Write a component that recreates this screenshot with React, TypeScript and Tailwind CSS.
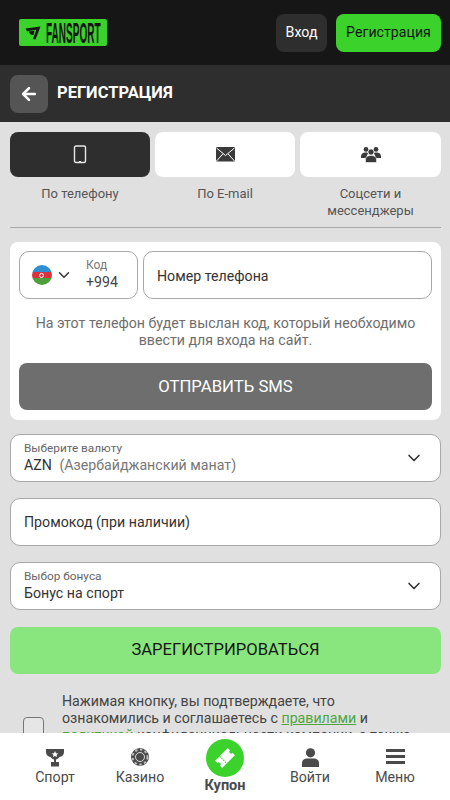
import type { ReactNode } from 'react'
import { ArrowLeft, ChevronDown } from 'lucide-react'

function PhoneIcon() {
  return (
    <svg width="14" height="19" viewBox="0 0 14 19" fill="none">
      <rect x="1.5" y="1" width="11" height="16.5" rx="1.5" stroke="currentColor" strokeWidth="1.4" />
      <rect x="6" y="16" width="2" height="1" fill="currentColor" />
    </svg>
  )
}

function MailIcon() {
  return (
    <svg width="19" height="15" viewBox="0 0 19 15">
      <rect width="19" height="14.5" rx="1" fill="#3a3a3a" />
      <path d="M0.5 1 L9.5 8.5 L18.5 1 M0.5 14 L7 6.8 M18.5 14 L12 6.8" fill="none" stroke="#fff" strokeWidth="1" />
    </svg>
  )
}

function PeopleIcon() {
  return (
    <svg width="20" height="17" viewBox="0 0 20 17" fill="#3a3a3a">
      <circle cx="5" cy="3.4" r="2.4" />
      <circle cx="15" cy="3.4" r="2.4" />
      <path d="M0 11 C0 7.5 2 6.5 5 6.5 C6 6.5 7 6.8 7 7 L5 12 H0Z" />
      <path d="M20 11 C20 7.5 18 6.5 15 6.5 C14 6.5 13 6.8 13 7 L15 12 H20Z" />
      <circle cx="10" cy="6" r="3" stroke="#fff" strokeWidth="0.6" />
      <path d="M4.5 16.5 V13.5 C4.5 10.5 7 9.5 10 9.5 C13 9.5 15.5 10.5 15.5 13.5 V16.5Z" stroke="#fff" strokeWidth="0.6" />
    </svg>
  )
}

function LogoMark() {
  return (
    <svg width="16" height="14" viewBox="0 0 16 14" fill="#161616" className="shrink-0">
      <path d="M0.5 2.5 L15.5 0.5 L10.5 13.5 L8 13 L11.3 3.8 L2 5.2Z" />
      <path d="M3.5 5.5 L9.5 4.8 L8.5 9 C6.5 9.5 4.5 8 3.5 5.5Z" />
    </svg>
  )
}

function Flag() {
  return (
    <span className="relative flex h-5 w-5 shrink-0 flex-col overflow-hidden rounded-full">
      <span className="h-[7px] bg-[#2f8fd0]" />
      <span className="h-[6px] bg-[#d8323f]" />
      <span className="h-[7px] bg-[#4f9e3c]" />
      <span className="absolute left-[7px] top-[7.5px] h-[5px] w-[5px] rounded-full border border-white" />
    </span>
  )
}

function NavItem({ label, icon }: { label: string; icon: ReactNode }) {
  return (
    <div className="flex flex-1 flex-col items-center text-[#4a4a4a]">
      <div className="flex h-[34px] items-end">{icon}</div>
      <span className="text-[14.2px] leading-5">{label}</span>
    </div>
  )
}

function Field({ children, right }: { children: ReactNode; right?: ReactNode }) {
  return (
    <div className="flex h-[48px] items-center justify-between rounded-[10px] border border-[#a8a8a8] bg-white pl-[13px] pr-[16px]">
      <div>{children}</div>
      {right}
    </div>
  )
}

const tabLabel = 'mt-[8px] text-center text-[13px] leading-[17px] text-[#555]'

export default function App() {
  return (
    <div className="flex h-screen flex-col overflow-hidden bg-[#e0e0e0] font-['Roboto',sans-serif]">
      <header className="flex h-[65px] shrink-0 items-center justify-between bg-[#161616] pl-[19px] pr-[9px]">
        <div className="flex h-[27px] w-[88px] items-center gap-[5px] rounded-[2px] bg-[#3bd22c] pl-[6px]">
          <LogoMark />
          <span className="w-[55px] shrink-0 origin-left scale-x-[0.335] whitespace-nowrap font-['Liberation_Sans',sans-serif] text-[30px] font-bold leading-none text-[#161616]">
            FANSPORT
          </span>
        </div>
        <div className="flex gap-[9px]">
          <button className="h-[38px] w-[51px] rounded-[8px] bg-[#2e2e2e] text-[14.2px] text-white">Вход</button>
          <button className="h-[38px] w-[105px] rounded-[8px] bg-[#3bd22c] text-[14.2px] text-[#161616]">Регистрация</button>
        </div>
      </header>

      <div className="flex h-[57px] shrink-0 items-center gap-[9px] bg-[#2e2e2e] pl-[10px]">
        <button className="flex h-[38px] w-[38px] items-center justify-center rounded-[8px] bg-[#555]">
          <ArrowLeft size={20} strokeWidth={3} className="text-white" />
        </button>
        <h1 className="text-[16.5px] font-bold text-white">РЕГИСТРАЦИЯ</h1>
      </div>

      <main className="min-h-0 flex-1 overflow-hidden px-[9px] pt-[10px]">
        <div className="grid grid-cols-[140px_140px_141px] gap-[5px] pl-[1px]">
          <div>
            <div className="flex h-[45px] items-center justify-center rounded-[8px] bg-[#2e2e2e] text-[#e8e8e8]">
              <PhoneIcon />
            </div>
            <p className={tabLabel}>По телефону</p>
          </div>
          <div>
            <div className="flex h-[45px] items-center justify-center rounded-[8px] bg-white">
              <MailIcon />
            </div>
            <p className={tabLabel}>По E-mail</p>
          </div>
          <div>
            <div className="flex h-[45px] items-center justify-center rounded-[8px] bg-white">
              <PeopleIcon />
            </div>
            <p className={tabLabel}>
              Соцсети и
              <br />
              мессенджеры
            </p>
          </div>
        </div>
        <div className="ml-[1px] mt-[8px] h-px bg-[#a8a8a8]" />

        <section className="ml-[1px] mt-[14px] rounded-[8px] bg-white px-[9px] pb-[10px] pt-[9px]">
          <div className="flex gap-[5px]">
            <div className="flex h-[48px] w-[119px] shrink-0 items-center rounded-[10px] border border-[#a8a8a8] pl-[12px]">
              <Flag />
              <ChevronDown size={18} strokeWidth={2} className="ml-[3px] text-[#333]" />
              <div className="ml-[13px]">
                <div className="text-[12px] leading-[15px] text-[#777]">Код</div>
                <div className="text-[14.2px] leading-[19px] text-[#444]">+994</div>
              </div>
            </div>
            <div className="flex h-[48px] flex-1 items-center rounded-[10px] border border-[#a8a8a8] pl-[13px] pt-[3px] text-[14.2px] text-[#333]">
              Номер телефона
            </div>
          </div>
          <p className="mt-[16px] px-2 text-center text-[14.2px] leading-[17px] text-[#6e6e6e]">
            На этот телефон будет выслан код, который необходимо ввести для входа на сайт.
          </p>
          <button className="mt-[14px] h-[47px] w-full rounded-[8px] bg-[#6e6e6e] text-[16.7px] text-white">
            ОТПРАВИТЬ SMS
          </button>
        </section>

        <div className="ml-[1px] mt-[14px] flex flex-col gap-[16px]">
          <Field right={<ChevronDown size={20} strokeWidth={2} className="text-[#333]" />}>
            <div className="text-[11.8px] leading-[15px] text-[#666]">Выберите валюту</div>
            <div className="text-[14.2px] leading-[19px] text-[#333]">
              AZN <span className="ml-1 text-[#777]">(Азербайджанский манат)</span>
            </div>
          </Field>
          <Field>
            <span className="text-[14.2px] text-[#333]">Промокод (при наличии)</span>
          </Field>
          <Field right={<ChevronDown size={20} strokeWidth={2} className="text-[#333]" />}>
            <div className="text-[11.8px] leading-[15px] text-[#666]">Выбор бонуса</div>
            <div className="text-[14.2px] leading-[19px] text-[#333]">Бонус на спорт</div>
          </Field>
        </div>

        <button className="ml-[1px] mt-[17px] h-[47px] w-[431px] rounded-[8px] bg-[#89e67e] text-[16.6px] text-[#161616]">
          ЗАРЕГИСТРИРОВАТЬСЯ
        </button>

        <div className="ml-[14px] mt-[19px] flex items-start gap-[18px]">
          <div className="mt-[24px] h-[21px] w-[21px] shrink-0 rounded-[4px] border border-[#777] bg-[#e6e6e6]" />
          <p className="max-w-[360px] text-[14.2px] leading-[17px] text-[#444]">
            Нажимая кнопку, вы подтверждаете, что ознакомились и соглашаетесь с{' '}
            <span className="text-[#4fa63f] underline">правилами</span> и{' '}
            <span className="text-[#4fa63f] underline">политикой</span> конфиденциальности компании, а также
          </p>
        </div>
      </main>

      <nav className="relative flex h-[67px] shrink-0 bg-white px-[12.5px]">
        <NavItem
          label="Спорт"
          icon={
            <svg width="20" height="19" viewBox="0 0 20 19" fill="#4a4a4a">
              <path d="M1 1 H19 V4 C19 7 17 8.5 14.5 9 C13.5 10.5 12 11.5 11 11.5 V14 H14 V18.5 H6 V14 H9 V11.5 C8 11.5 6.5 10.5 5.5 9 C3 8.5 1 7 1 4Z" />
              <path d="M10 3 L11 5.2 L13.3 5.4 L11.5 6.9 L12.1 9 L10 7.9 L7.9 9 L8.5 6.9 L6.7 5.4 L9 5.2Z" fill="#fff" />
            </svg>
          }
        />
        <NavItem
          label="Казино"
          icon={
            <svg width="18" height="18" viewBox="0 0 18 18" className="mb-[1px]">
              <circle cx="9" cy="9" r="9" fill="#4a4a4a" />
              <circle cx="9" cy="9" r="7.5" fill="none" stroke="#bbb" strokeWidth="2" strokeDasharray="2.5 2.5" />
              <circle cx="9" cy="9" r="4.5" fill="#4a4a4a" stroke="#fff" strokeWidth="0.8" />
            </svg>
          }
        />
        <div className="flex flex-1 flex-col items-center">
          <div className="mt-[6px] flex h-[38px] w-[38px] items-center justify-center rounded-full bg-[#3bd22c]">
            <svg width="20" height="20" viewBox="0 0 20 20">
              <g transform="rotate(-45 10 10)">
                <path d="M1 5 H19 V8 A2 2 0 0 0 19 12 V15 H1 V12 A2 2 0 0 0 1 8Z" fill="#fff" />
                <path d="M7.5 5 V15" stroke="#3bd22c" strokeWidth="1" strokeDasharray="1.5 1" />
              </g>
            </svg>
          </div>
          <span className="text-[14.5px] font-bold leading-[17px] text-[#4a4a4a]">Купон</span>
        </div>
        <NavItem
          label="Войти"
          icon={
            <svg width="17" height="19" viewBox="0 0 17 19" fill="#4a4a4a">
              <circle cx="8.5" cy="4.8" r="4.6" />
              <path d="M0 19 V15 C0 12 2.5 10.5 5 10.5 H12 C14.5 10.5 17 12 17 15 V19Z" />
            </svg>
          }
        />
        <NavItem
          label="Меню"
          icon={
            <svg width="19" height="16" viewBox="0 0 19 16" fill="#4a4a4a" className="mb-[2px]">
              <rect width="19" height="3" />
              <rect y="6" width="19" height="3" />
              <rect y="12" width="19" height="3" />
            </svg>
          }
        />
      </nav>
    </div>
  )
}
